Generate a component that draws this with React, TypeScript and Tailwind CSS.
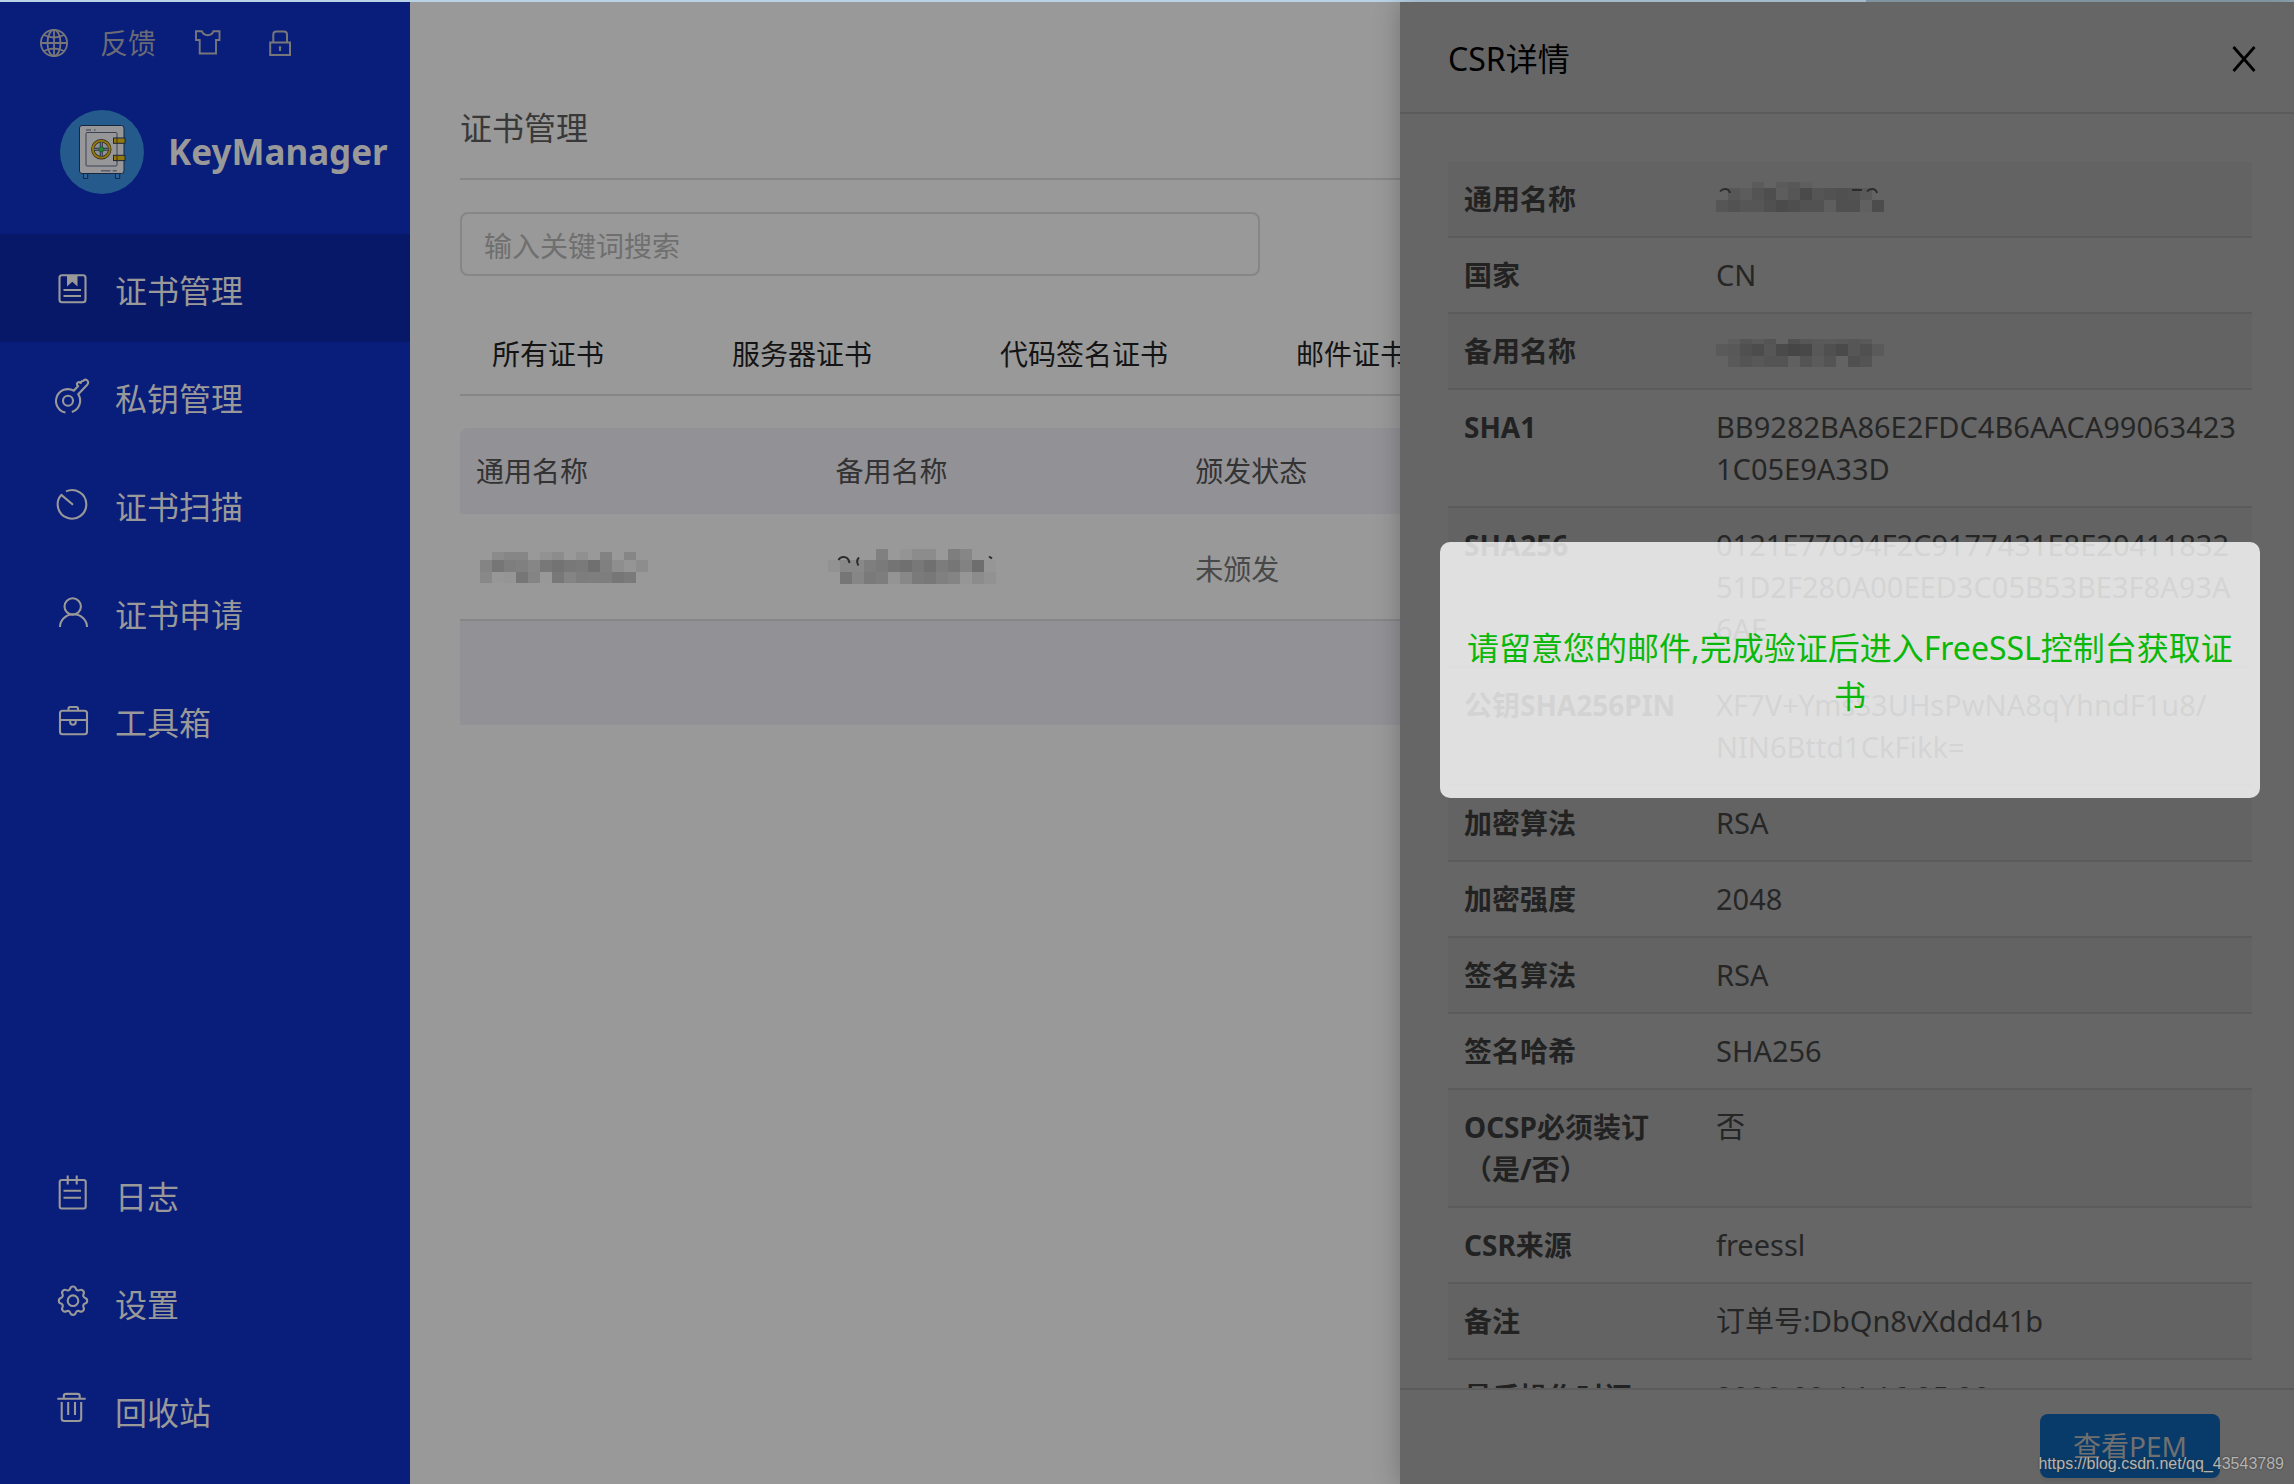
import type { ReactNode } from 'react'

type MosaicRow = { y: number; h: number; cells: string }

// 8 rounded teeth
const gearPath = (() => {
  const pt = (deg: number) => {
    const a = (deg * Math.PI) / 180
    return `${(19 + 12.4 * Math.cos(a)).toFixed(2)} ${(16.7 + 12.4 * Math.sin(a)).toFixed(2)}`
  }
  let d = `M${pt(-13)}`
  for (let i = 0; i < 8; i++) {
    d += `A2.9 2.9 0 0 1 ${pt(i * 45 + 13)}A2.6 2.6 0 0 0 ${pt(i * 45 + 32)}`
  }
  return d + 'Z'
})()

const icons: Record<string, ReactNode> = {
  book: (
    <>
      <rect x="5.5" y="5.3" width="26" height="27" rx="2.5" />
      <path d="M13 6h10.500v10.500l-5.200-4.800-5.300 4.800z" fill="currentColor" stroke="none" />
      <path d="M9.500 20h17.500M9.500 26h17.500" />
    </>
  ),
  key: (
    <>
      <path d="M11.500 34.500A11.800 11.800 0 1 1 19.700 12.700L24.200 8Q22 6.500 23.500 4.700Q25 3.500 26.700 5Q27 3 29 3Q31 .6 33 2.200Q35.500 4.500 33 7L24.200 16.200A11.800 11.800 0 0 1 17.800 34" />
      <circle cx="14" cy="22.700" r="5" />
    </>
  ),
  scan: <path d="M12 5.400A14.300 14.300 0 1 1 7.300 8.900L19 18.700" />,
  user: (
    <>
      <circle cx="18.700" cy="12.500" r="8.200" />
      <path d="M6 33A13.300 12.600 0 0 1 33 33" />
    </>
  ),
  toolbox: (
    <>
      <rect x="6" y="8.800" width="27" height="23.500" rx="2.500" />
      <path d="M14.500 8.800V6.500Q14.500 5 16 5H22.500Q24 5 24 6.500V8.800M6 18H33M16.200 18V20A2.700 2.700 0 0 0 21.700 20V18" />
    </>
  ),
  log: (
    <>
      <rect x="5.700" y="4" width="26" height="28.500" rx="2" />
      <path d="M13.700 -.500V8.500M22.700 -.500V8.500M9.500 14.700H27M9.500 21.700H27" />
    </>
  ),
  gear: (
    <>
      <path d={gearPath} />
      <circle cx="19" cy="16.700" r="5.300" />
    </>
  ),
  trash: (
    <path d="M3.300 6.800H31.700M9.800 6.800V4Q9.800 1.900 12 1.900H23.500Q25.700 1.900 25.700 4V6.800M7.700 10V26.500Q7.700 29 10.200 29H24.800Q27.200 29 27.200 26.500V10M14.200 10V23M21 10V23" />
  ),
}

const mainNav = [
  { icon: 'book', label: '证书管理', active: true },
  { icon: 'key', label: '私钥管理' },
  { icon: 'scan', label: '证书扫描' },
  { icon: 'user', label: '证书申请' },
  { icon: 'toolbox', label: '工具箱' },
]

const bottomNav = [
  { icon: 'log', label: '日志' },
  { icon: 'gear', label: '设置' },
  { icon: 'trash', label: '回收站' },
]

const tabs = ['所有证书', '服务器证书', '代码签名证书', '邮件证书']

// cells are two-digit gray levels, ".." leaves the cell empty
const listName: MosaicRow[] = [
  { y: 6, h: 8, cells: '.. .. 8b 86 86 .. 92 8c .. 90 .. 82 .. 86' },
  { y: 14, h: 12, cells: '.. 84 76 7e 80 86 78 73 78 7a 70 80 8e 95 8d' },
  { y: 26, h: 11, cells: '.. 88 97 95 76 84 98 78 84 7d 7e 7e 76 7a' },
]
const listAlt: MosaicRow[] = [
  { y: 3, h: 11, cells: '.. .. .. .. 80 .. 94 8c 8c .. 7e 86' },
  { y: 14, h: 12, cells: '92 88 88 7e 7a 74 70 78 70 7c 76 82 6e 96' },
  { y: 26, h: 12, cells: '.. 76 86 7a 7d 94 88 7a 78 80 84 96 8c 92' },
]
const csrName: MosaicRow[] = [
  { y: 4, h: 6, cells: '.. .. .. 5b .. 5b 58 5e' },
  { y: 10, h: 12, cells: '.. 57 5c 54 4e 5d 56 4a 55 52 50 52 59' },
  { y: 22, h: 12, cells: '56 52 56 56 50 4b 4e 52 52 5e 50 50 60 4c' },
]
const csrAlt: MosaicRow[] = [
  { y: 9, h: 5, cells: '.. 5d 55 5a 54 .. 50 56 59 5a 58 56 59' },
  { y: 14, h: 12, cells: '5a 58 50 4c 56 4a 46 48 58 50 4a 56 50 5a' },
  { y: 26, h: 11, cells: '.. 59 54 58 54 54 60 54 5b 54 .. 50 54' },
]

function Mosaic({ rows, children, className = '' }: { rows: MosaicRow[]; children?: ReactNode; className?: string }) {
  return (
    <svg width="180" height="42" viewBox="0 0 180 42" className={className} shapeRendering="crispEdges" aria-hidden="true">
      {rows.map((row) =>
        row.cells.split(' ').map((c, i) =>
          c === '..' ? null : <rect key={`${row.y}-${i}`} x={i * 12} y={row.y} width="12" height={row.h} fill={`#${c}${c}${c}`} />
        )
      )}
      <g fill="none" stroke="#2c2c2c" strokeWidth="2" shapeRendering="auto">{children}</g>
    </svg>
  )
}

const details: { label: string; value: ReactNode }[] = [
  {
    label: '通用名称',
    value: (
      <Mosaic rows={csrName}>
        <path d="M4 13.500Q6 11 9 11Q13 11 14 15M136 12H146M151 13.500Q153 11 156 11Q160 11 161 15" />
      </Mosaic>
    ),
  },
  { label: '国家', value: 'CN' },
  { label: '备用名称', value: <Mosaic rows={csrAlt} /> },
  { label: 'SHA1', value: 'BB9282BA86E2FDC4B6AACA99063423\n1C05E9A33D' },
  { label: 'SHA256', value: '0121E77094F2C9177431E8E20411832\n51D2F280A00EED3C05B53BE3F8A93A\n6AE' },
  { label: '公钥SHA256PIN', value: 'XF7V+YmsS3UHsPwNA8qYhndF1u8/\nNIN6Bttd1CkFikk=' },
  { label: '加密算法', value: 'RSA' },
  { label: '加密强度', value: '2048' },
  { label: '签名算法', value: 'RSA' },
  { label: '签名哈希', value: 'SHA256' },
  { label: 'OCSP必须装订\n（是/否）', value: '否' },
  { label: 'CSR来源', value: 'freessl' },
  { label: '备注', value: '订单号:DbQn8vXddd41b' },
  { label: '最后操作时间', value: '2020-09-14 16:25:20' },
]

function NavItem({ icon, label, active }: { icon: string; label: string; active?: boolean }) {
  return (
    <a href="#" className={`flex h-[108px] items-center gap-[25px] pl-[54px] text-[32px] leading-[48px] text-[#999999] ${active ? 'bg-[#071868]' : ''}`}>
      <svg width="36" height="36" viewBox="0 0 36 36" className="overflow-visible" fill="none" stroke="currentColor" strokeWidth="2.1" strokeLinejoin="round">
        {icons[icon]}
      </svg>
      <span className="pt-1.5">{label}</span>
    </a>
  )
}

function Logo() {
  return (
    <svg width="84" height="84" viewBox="0 0 84 84" aria-hidden="true">
      <circle cx="42" cy="42" r="42" fill="#245a8c" />
      <g stroke="#18263f" strokeWidth="1">
        <path d="M23.500 63v5.500h4.200V63M55.500 63v5.500h4.200V63" fill="#2c6499" />
        <rect x="19.500" y="15.500" width="44.500" height="48" rx="2.500" fill="#97979a" />
        <rect x="26" y="22.500" width="31" height="33.500" rx="1" fill="#97979a" stroke="#3a4252" />
        <rect x="53.500" y="28" width="11.500" height="5.300" fill="#94780c" />
        <rect x="53.500" y="45.300" width="11.500" height="5.300" fill="#94780c" />
      </g>
      <path d="M57 27.500v6.500M57 45v6.500" stroke="#3a3410" strokeWidth="1" />
      <path d="M26 20h5M34 20h1.500M41 60.800h9.500M52.700 60.800h4" stroke="#565c68" strokeWidth="1.500" />
      <circle cx="41.300" cy="39.300" r="8.500" fill="#8f9299" stroke="#2a2a1c" strokeWidth="3.400" />
      <circle cx="41.300" cy="39.300" r="8.500" fill="none" stroke="#94780c" strokeWidth="2" />
      <path d="M41.300 32v14.600M34 39.300h14.600" stroke="#2c3444" strokeWidth="3" />
      <path d="M41.300 32v14.600M34 39.300h14.600" stroke="#7d828c" strokeWidth="1" />
      <circle cx="41.300" cy="39.300" r="2.600" fill="#1f8a2c" stroke="#24503a" strokeWidth=".8" />
    </svg>
  )
}

function Sidebar() {
  return (
    <aside className="flex w-[410px] shrink-0 flex-col bg-[#091d7a] pb-5">
      <div className="flex h-[82px] items-center gap-8 pl-10 text-[#77777a]">
        <button aria-label="Language">
          <svg width="28" height="28" viewBox="0 0 28 28" fill="none" stroke="currentColor" strokeWidth="1.8">
            <circle cx="14" cy="14" r="13.100" />
            <ellipse cx="14" cy="14" rx="6.500" ry="13.100" />
            <path d="M14 1v26M1 14h26M4 6Q14 11 24 6M4 22Q14 17 24 22" />
          </svg>
        </button>
        <a href="#" className="text-[28px] leading-[42px] text-[#6b6b75]">反馈</a>
        <button aria-label="Theme">
          <svg width="40" height="28" viewBox="-7 -1 40 28" fill="none" stroke="currentColor" strokeWidth="1.9">
            <path d="M1 1.200H6.800Q8.500 5.200 12.700 5.200Q17 5.200 18.500 1.200H24.500V10H21V23.500H4.700V10H1Z" />
          </svg>
        </button>
        <button aria-label="Lock">
          <svg width="40" height="28" viewBox="0 0 40 28" fill="none" stroke="currentColor" strokeWidth="2">
            <rect x="10.200" y="13.500" width="19.800" height="12.500" />
            <path d="M13.300 13V5.500Q13.300 2.500 16.300 2.500H24Q27 2.500 27 5.500V13M20 18v4M18.800 18.300h2.400" />
          </svg>
        </button>
      </div>
      <div className="flex h-[150px] items-start gap-6 pt-[26px] pl-[60px]">
        <Logo />
        <span className="text-[35px] leading-[84px] font-bold text-[#999999]">KeyManager</span>
      </div>
      <nav>
        {mainNav.map((item) => (
          <NavItem key={item.label} {...item} />
        ))}
      </nav>
      <nav className="mt-auto">
        {bottomNav.map((item) => (
          <NavItem key={item.label} {...item} />
        ))}
      </nav>
    </aside>
  )
}

function CertList() {
  return (
    <main className="min-w-0 flex-1 overflow-hidden bg-[#999999] pr-9 pl-[50px]">
      <h1 className="border-b-2 border-[#868686] pt-[102px] pb-[26px] text-[32px] leading-[48px] text-[#383838]">证书管理</h1>
      <input
        type="text"
        aria-label="输入关键词搜索"
        placeholder="输入关键词搜索"
        className="mt-8 block h-16 w-[800px] rounded-lg border-2 border-[#868686] bg-transparent px-[22px] pt-1 text-[28px] placeholder:text-[#6f6f6f]"
      />
      <div className="flex h-[120px] items-center gap-32 border-b-2 border-[#868686] pt-[38px] pl-8 text-[28px] leading-[42px] whitespace-nowrap text-[#141414]">
        {tabs.map((tab) => (
          <button key={tab}>{tab}</button>
        ))}
      </div>
      <table className="mt-8 w-full table-fixed text-left text-[28px] leading-[42px]">
        <thead>
          <tr className="h-[86px] text-[#333333]">
            <th className="rounded-tl-lg bg-[#929196] px-4 font-normal">通用名称</th>
            <th className="bg-[#929196] px-4 font-normal">备用名称</th>
            <th className="bg-[#929196] px-4 font-normal">颁发状态</th>
            <th className="bg-[#929196] px-4 font-normal"></th>
            <th className="rounded-tr-lg bg-[#929196] px-4 font-normal"></th>
          </tr>
        </thead>
        <tbody>
          <tr className="h-[106px] border-b-2 border-[#868686] text-[#484848]">
            <td className="px-4">
              <Mosaic rows={listName} className="-ml-2" />
            </td>
            <td className="px-4">
              <Mosaic rows={listAlt} className="-ml-2">
                <path d="M10.500 14Q12 11 15.500 11Q20.500 11 21.500 17M31 11.500Q27.500 15 30.500 19.500" />
                <path d="M161 10.500l3 2" />
              </Mosaic>
            </td>
            <td className="px-4 pt-1">未颁发</td>
            <td className="px-4"></td>
            <td className="px-4"></td>
          </tr>
          <tr className="h-[105px] bg-[#929196]">
            <td colSpan={5}></td>
          </tr>
        </tbody>
      </table>
    </main>
  )
}

function CsrDrawer() {
  return (
    <section className="absolute inset-y-0 right-0 flex w-[894px] flex-col bg-[#666666] shadow-[0_0_24px_rgba(0,0,0,0.25)]">
      <header className="flex h-28 shrink-0 items-center justify-between border-b-2 border-[#5b5b5b] pt-1 pr-[38px] pl-12 text-black">
        <h2 className="text-[32px] leading-[48px]">CSR详情</h2>
        <button aria-label="Close">
          <svg width="24" height="26" viewBox="0 0 24 26" fill="none" stroke="currentColor" strokeWidth="2.8">
            <path d="M1.500 1L22.500 25M22.500 1L1.500 25" />
          </svg>
        </button>
      </header>

      <div className="min-h-0 flex-1 overflow-hidden pt-12 pr-[42px] pl-12">
        <table className="w-full table-fixed text-left align-top text-[28px] leading-[42px] text-[#262626]">
          <tbody>
            {details.map((d) => (
              <tr key={d.label} className="border-b-2 border-[#5b5b5b] odd:bg-[#636363]">
                <th scope="row" className="w-[252px] py-4 pr-0 pl-4 align-top font-bold whitespace-pre text-[#222222]">{d.label}</th>
                <td className="py-4 pl-4 align-top text-[29px] leading-[42px] whitespace-pre">{d.value}</td>
              </tr>
            ))}
          </tbody>
        </table>
      </div>

      <footer className="flex h-24 shrink-0 items-start justify-end border-t-2 border-[#5b5b5b] pt-6 pr-[74px]">
        <button className="h-16 min-w-[180px] rounded-lg bg-[#083b69] px-8 text-[28px] leading-[42px] text-[#707070] shadow-[0_4px_2px_rgba(0,0,0,0.04)]">查看PEM</button>
      </footer>

      <div role="alert" className="absolute top-[540px] right-[34px] left-10 flex h-64 items-center justify-center rounded-[10px] bg-white/80 px-6 pt-[3px] text-center text-[32px] leading-[48px] text-[#0ab80a]">
        <p>请留意您的邮件,完成验证后进入FreeSSL控制台获取证书</p>
      </div>

      <span className="absolute right-[10px] bottom-2 font-['Liberation_Sans',sans-serif] text-base text-[#b4b4b4] [text-shadow:0_0_2px_#333333]">
        https://blog.csdn.net/qq_43543789
      </span>
    </section>
  )
}

export default function App() {
  return (
    <div className="flex h-screen flex-col overflow-hidden font-['Noto_Sans','Noto_Sans_CJK_SC',sans-serif]">
      <div className="flex h-[2px] shrink-0 bg-[#b8d3e6]">
        <div className="ml-auto w-[428px] bg-[#92a7b6]"></div>
      </div>
      <div className="relative flex min-h-0 flex-1">
        <Sidebar />
        <CertList />
        <CsrDrawer />
      </div>
    </div>
  )
}
